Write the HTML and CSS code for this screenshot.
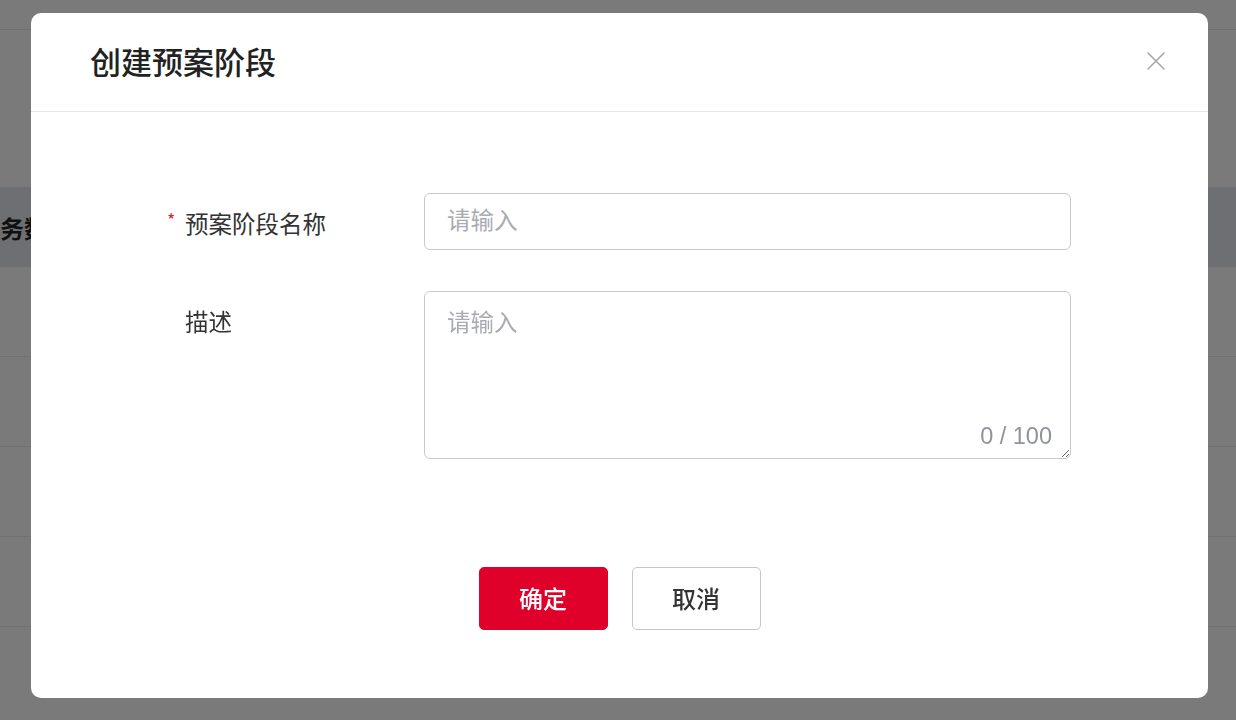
FILE: index.html
```html
<!DOCTYPE html>
<html lang="zh-CN">
<head>
<meta charset="utf-8">
<title>创建预案阶段</title>
<link rel="stylesheet" href="styles.css">
</head>
<body>
<div class="page">
  <div class="page-top"></div>
  <div class="table-head"><span class="th-text">业务数据</span></div>
  <div class="table-row"></div>
  <div class="table-row"></div>
  <div class="table-row"></div>
  <div class="table-row"></div>
</div>
<div class="overlay">
  <div class="modal">
    <div class="modal-header">
      <h2 class="modal-title">创建预案阶段</h2>
      <button class="close-btn" aria-label="关闭">
        <svg width="20" height="20" viewBox="0 0 20 20"><path d="M2 2 L18 18 M18 2 L2 18" stroke="#a2a4ab" stroke-width="1.5" fill="none" stroke-linecap="round"/></svg>
      </button>
    </div>
    <div class="modal-body">
      <div class="form-row">
        <label class="form-label"><span class="req">*</span>预案阶段名称</label>
        <div class="form-control">
          <input class="text-input" type="text" placeholder="请输入">
        </div>
      </div>
      <div class="form-row">
        <label class="form-label">描述</label>
        <div class="form-control textarea-wrap">
          <textarea class="text-area" placeholder="请输入"></textarea>
          <span class="count">0 / 100</span>
        </div>
      </div>
    </div>
    <div class="modal-footer">
      <button class="btn btn-primary">确定</button>
      <button class="btn btn-default">取消</button>
    </div>
  </div>
</div>
</body>
</html>
```
FILE: styles.css
```css
* { box-sizing: border-box; }
html, body { margin: 0; padding: 0; }
body {
  width: 1236px;
  height: 720px;
  overflow: hidden;
  background: #f5f6f8;
  font-family: "Liberation Sans", "Noto Sans CJK SC", sans-serif;
}
.page {
  width: 1236px;
  height: 720px;
  background: #fff;
  overflow: hidden;
}
.page-top {
  height: 30px;
  border-bottom: 1px solid #e8e8e8;
}
.table-head {
  margin-top: 157px;
  height: 80px;
  background: #e6e8ee;
  display: flex;
  align-items: center;
  overflow: hidden;
}
.th-text {
  margin-left: -24px;
  font-size: 24px;
  font-weight: 700;
  color: #222;
}
.table-row {
  height: 90px;
  border-bottom: 1px solid #ececec;
}
.overlay {
  position: fixed;
  inset: 0;
  background: rgba(0, 0, 0, 0.52);
  display: flex;
  align-items: flex-start;
  padding: 13px 0 0 31px;
}
.modal {
  width: 1177px;
  height: 685px;
  background: #fff;
  border-radius: 10px;
  display: flex;
  flex-direction: column;
}
.modal-header {
  height: 99px;
  border-bottom: 1px solid #e4e6ec;
  display: flex;
  align-items: center;
  justify-content: space-between;
  padding: 0 42px 4px 59px;
}
.modal-title {
  margin: 0;
  font-size: 31px;
  font-weight: 500;
  color: #222;
  font-family: "Noto Sans CJK SC", sans-serif;
}
.close-btn {
  border: 0;
  background: none;
  padding: 0;
  width: 20px;
  height: 20px;
  display: flex;
  cursor: pointer;
  margin-top: 2px;
}
.modal-body {
  padding: 81px 137px 0 154px;
  display: flex;
  flex-direction: column;
  gap: 41px;
}
.form-row {
  display: flex;
  align-items: flex-start;
}
.form-label {
  width: 239px;
  flex: none;
  position: relative;
  height: 57px;
  line-height: 60px;
  font-size: 23.5px;
  color: #333;
  font-family: "Noto Sans CJK SC", sans-serif;
}
.req {
  position: absolute;
  left: -18px;
  top: 0;
  color: #e0243a;
  font-size: 18px;
  line-height: 52px;
}
.form-control {
  flex: 1;
}
.text-input {
  width: 100%;
  height: 57px;
  border: 1.5px solid #c7c9cf;
  border-radius: 6px;
  padding: 0 22px 5px;
  font-size: 23.5px;
  font-family: "Noto Sans CJK SC", sans-serif;
  outline: none;
  color: #333;
}
.textarea-wrap {
  position: relative;
}
.text-area {
  display: block;
  width: 100%;
  height: 168px;
  border: 1.5px solid #c7c9cf;
  border-radius: 6px;
  padding: 12px 22px;
  font-size: 23.5px;
  line-height: 34px;
  font-family: "Noto Sans CJK SC", sans-serif;
  outline: none;
  resize: vertical;
  color: #333;
}
.text-input::placeholder,
.text-area::placeholder {
  color: #a9abb1;
}
.count {
  position: absolute;
  right: 19px;
  bottom: 9px;
  font-size: 23.5px;
  color: #909399;
  font-family: "Liberation Sans", sans-serif;
}
.modal-footer {
  margin-top: 108px;
  display: flex;
  justify-content: center;
  gap: 24px;
}
.btn {
  width: 129px;
  height: 63px;
  border-radius: 5px;
  font-size: 24px;
  font-weight: 500;
  font-family: "Noto Sans CJK SC", sans-serif;
  cursor: pointer;
  padding: 0 0 3px;
}
.btn-primary {
  background: #e0012b;
  border: 1px solid #e0012b;
  color: #fff;
}
.btn-default {
  background: #fff;
  border: 1.5px solid #c3c6cd;
  color: #333;
}
```
